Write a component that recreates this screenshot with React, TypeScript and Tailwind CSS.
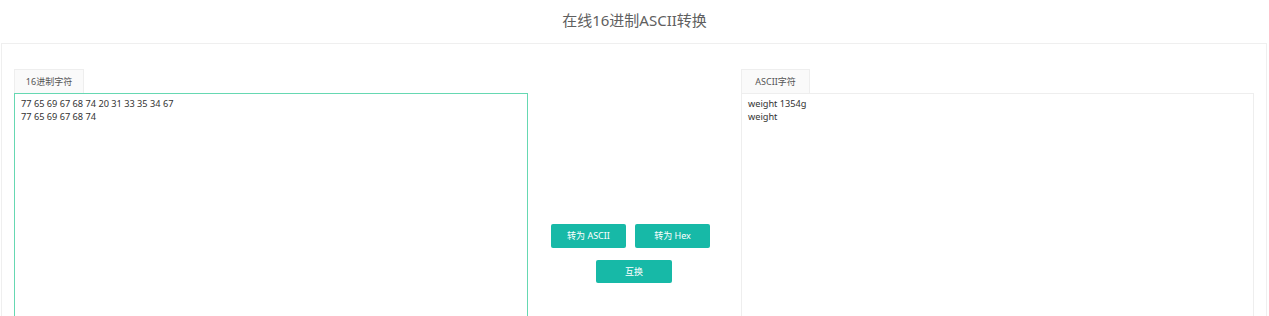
import { useState } from "react";

const hexToAscii = (hex: string) =>
  hex
    .split("\n")
    .map((line) =>
      line
        .trim()
        .split(/\s+/)
        .filter(Boolean)
        .map((h) => String.fromCharCode(parseInt(h, 16)))
        .join("")
    )
    .join("\n");

const asciiToHex = (text: string) =>
  text
    .split("\n")
    .map((line) =>
      Array.from(line)
        .map((c) => c.charCodeAt(0).toString(16).padStart(2, "0"))
        .join(" ")
    )
    .join("\n");

export default function App() {
  const [hex, setHex] = useState("77 65 69 67 68 74 20 31 33 35 34 67\n77 65 69 67 68 74");
  const [ascii, setAscii] = useState("weight 1354g\nweight");

  // 互换：两边内容对调
  const swap = () => {
    setHex(ascii);
    setAscii(hex);
  };

  return (
    <div className="min-h-[316px] bg-white font-['Noto_Sans','Noto_Sans_CJK_SC',sans-serif]">
      <h1 className="h-[43px] pt-[9px] text-center text-[15px] leading-[22px] text-[#606060]">
        在线16进制ASCII转换
      </h1>

      <div className="ml-px mr-[2px] border border-[#efefef] px-[12px] pt-[25px] pb-[12px]">
        <div className="grid grid-cols-[514px_213px_513px]">
          <div className="flex flex-col">
            <div className="flex h-[24px] w-[70px] items-center justify-center border border-b-0 border-[#eeeeee] bg-[#fafafa] text-[9px] text-[#555]">
              16进制字符
            </div>
            <textarea
              value={hex}
              onChange={(e) => setHex(e.target.value)}
              className="h-[300px] w-full resize-none border border-[#66d8b2] px-[6px] pt-[3px] text-[9.2px] leading-[13px] text-[#333] outline-none"
            />
          </div>

          <div className="flex flex-col pt-[155px]">
            <div className="ml-[23px] flex gap-[9px]">
              <button
                onClick={() => setAscii(hexToAscii(hex))}
                className="h-[24px] w-[75px] rounded-[2px] bg-[#17b9a7] text-[9px] text-white"
              >
                转为 ASCII
              </button>
              <button
                onClick={() => setHex(asciiToHex(ascii))}
                className="h-[24px] w-[75px] rounded-[2px] bg-[#17b9a7] text-[9px] text-white"
              >
                转为 Hex
              </button>
            </div>
            <button
              onClick={swap}
              className="ml-[68px] mt-[12px] h-[23px] w-[76px] rounded-[2px] bg-[#17b9a7] text-[9px] text-white"
            >
              互换
            </button>
          </div>

          <div className="flex flex-col">
            <div className="flex h-[24px] w-[69px] items-center justify-center border border-b-0 border-[#eeeeee] bg-[#fafafa] text-[9px] text-[#555]">
              ASCII字符
            </div>
            <textarea
              value={ascii}
              onChange={(e) => setAscii(e.target.value)}
              className="h-[300px] w-full resize-none border border-[#eeeeee] px-[6px] pt-[3px] text-[9.2px] leading-[13px] text-[#333] outline-none"
            />
          </div>
        </div>
      </div>
    </div>
  );
}
